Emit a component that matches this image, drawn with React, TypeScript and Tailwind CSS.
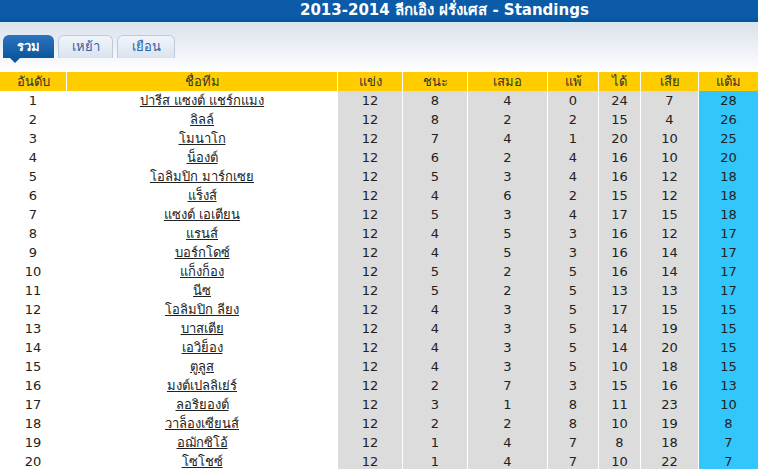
const rows: [number, string, number, number, number, number, number, number, number][] = [
  [1, "ปารีส แซงต์ แชร์กแมง", 12, 8, 4, 0, 24, 7, 28],
  [2, "ลิลล์", 12, 8, 2, 2, 15, 4, 26],
  [3, "โมนาโก", 12, 7, 4, 1, 20, 10, 25],
  [4, "น็องต์", 12, 6, 2, 4, 16, 10, 20],
  [5, "โอลิมปิก มาร์กเซย", 12, 5, 3, 4, 16, 12, 18],
  [6, "แร็งส์", 12, 4, 6, 2, 15, 12, 18],
  [7, "แซงต์ เอเตียน", 12, 5, 3, 4, 17, 15, 18],
  [8, "แรนส์", 12, 4, 5, 3, 16, 12, 17],
  [9, "บอร์กโดซ์", 12, 4, 5, 3, 16, 14, 17],
  [10, "แก็งก็อง", 12, 5, 2, 5, 16, 14, 17],
  [11, "นีซ", 12, 5, 2, 5, 13, 13, 17],
  [12, "โอลิมปิก ลียง", 12, 4, 3, 5, 17, 15, 15],
  [13, "บาสเตีย", 12, 4, 3, 5, 14, 19, 15],
  [14, "เอวิย็อง", 12, 4, 3, 5, 14, 20, 15],
  [15, "ตูลูส", 12, 4, 3, 5, 10, 18, 15],
  [16, "มงต์เปลลิเย่ร์", 12, 2, 7, 3, 15, 16, 13],
  [17, "ลอริยองต์", 12, 3, 1, 8, 11, 23, 10],
  [18, "วาล็องเซียนส์", 12, 2, 2, 8, 10, 19, 8],
  [19, "อฌักซิโอ้", 12, 1, 4, 7, 8, 18, 7],
  [20, "โซโชซ์", 12, 1, 4, 7, 10, 22, 7],
];

const heads = ["อันดับ", "ชื่อทีม", "แข่ง", "ชนะ", "เสมอ", "แพ้", "ได้", "เสีย", "แต้ม"];

const cols = "grid grid-cols-[66px_270px_64px_64px_79px_50px_41px_57px_1fr] gap-x-px";

export default function App() {
  return (
    <div className="w-[758px] h-[469px] overflow-hidden bg-white font-['Tahoma','DejaVu_Sans','Noto_Sans',sans-serif] text-[13px] text-[#222]">
      <div className="h-[22px] bg-gradient-to-b from-[#0b5ba8] from-75% to-[#08519a] pl-[300px] text-[15px] font-bold leading-[20px] text-white">
        2013-2014 ลีกเอิง ฝรั่งเศส - Standings
      </div>
      <div className="h-px bg-[#cdeef4]" />
      <div className="h-[49px] bg-gradient-to-b from-[#dbe2ed] to-white pt-[12px] pl-[3px]">
        <div className="flex items-start gap-[4px]">
          <div className="relative">
            <div className="flex h-[23px] w-[51px] items-center justify-center rounded-t-[6px] bg-gradient-to-b from-[#2a74bd] to-[#0b56a0] font-bold text-white">
              รวม
            </div>
            <div className="absolute left-[7px] top-[23px] h-0 w-0 border-x-[5px] border-t-[5px] border-x-transparent border-t-[#0b56a0]" />
          </div>
          <div className="flex h-[23px] w-[55px] items-center justify-center rounded-t-[6px] border border-b-0 border-[#bccbdc] bg-gradient-to-b from-[#f1f5fa] to-[#d9e3ef] text-[#2a62a8]">
            เหย้า
          </div>
          <div className="flex h-[23px] w-[58px] items-center justify-center rounded-t-[6px] border border-b-0 border-[#bccbdc] bg-gradient-to-b from-[#f1f5fa] to-[#d9e3ef] text-[#2a62a8]">
            เยือน
          </div>
        </div>
      </div>
      <div className="flex flex-col gap-y-px">
        <div className={`${cols} h-[18px] leading-[19px]`}>
          {heads.map((h) => (
            <div key={h} className="bg-[#ffcc00] text-center text-[#333]">
              {h}
            </div>
          ))}
        </div>
        {rows.map((r) => (
          <div key={r[0]} className={`${cols} h-[18px] leading-[19px]`}>
            <div className="text-center">{r[0]}</div>
            <div className="text-center">
              <span className="underline">{r[1]}</span>
            </div>
            {r.slice(2, 8).map((v, i) => (
              <div key={i} className="bg-[#dcdcdc] text-center">
                {v}
              </div>
            ))}
            <div className="bg-[#33c6fb] text-center">{r[8]}</div>
          </div>
        ))}
      </div>
    </div>
  );
}
